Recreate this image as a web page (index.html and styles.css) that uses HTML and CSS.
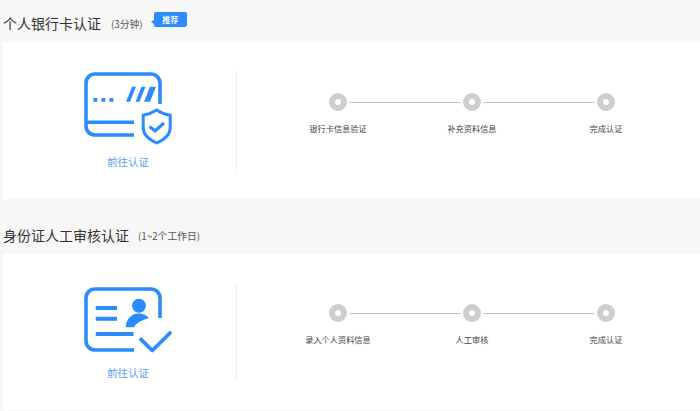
FILE: index.html
```html
<!DOCTYPE html>
<html lang="zh">
<head>
<meta charset="utf-8">
<title>认证</title>
<link rel="stylesheet" href="styles.css">
</head>
<body>
<section class="section first">
  <header class="head">
    <h2 class="title">个人银行卡认证</h2>
    <span class="sub">(3分钟)</span>
    <span class="badge">推荐</span>
  </header>
  <div class="card">
    <div class="entry">
      <svg class="icon" width="90" height="74" viewBox="0 0 90 74" fill="none" stroke="#2d8cfc" stroke-width="3.6">
        <path d="M76 32V11a9 9 0 0 0-9-9H11a9 9 0 0 0-9 9v43a9 9 0 0 0 9 9h39"/>
        <path d="M2 50.300h48"/>
        <g fill="#2d8cfc" stroke="none">
          <rect x="9.500" y="26" width="3.800" height="3.800"/>
          <rect x="17.500" y="26" width="3.800" height="3.800"/>
          <rect x="25.500" y="26" width="3.800" height="3.800"/>
          <path d="M42 29.700 48 14.700h4l-6 15z"/>
          <path d="M51.500 29.700 57.500 14.700h4l-6 15z"/>
          <path d="M60 29.700 66 14.700H72l-6 15z"/>
        </g>
        <path stroke-width="3" d="M72.700 38C68 41 64 42.500 59.200 43.200V56c0 7 6.800 12 13.500 15 6.700-3 13.500-8 13.500-15V43.200C81.500 42.500 77 41 72.700 38Z"/>
        <path stroke-width="3.200" d="M65.500 54.500 71 59l9-8"/>
      </svg>
      <a class="link">前往认证</a>
    </div>
    <ol class="steps">
      <li class="step"><span class="dot"></span><span class="label">银行卡信息验证</span></li>
      <li class="step"><span class="dot"></span><span class="label">补充资料信息</span></li>
      <li class="step"><span class="dot"></span><span class="label">完成认证</span></li>
    </ol>
  </div>
</section>
<section class="section second">
  <header class="head">
    <h2 class="title">身份证人工审核认证</h2>
    <span class="sub">(1~2个工作日)</span>
  </header>
  <div class="card">
    <div class="entry">
      <svg class="icon" width="90" height="74" viewBox="0 0 90 74" fill="none" stroke="#2d8cfc" stroke-width="3.6">
        <path d="M76 31V11a9 9 0 0 0-9-9H11a9 9 0 0 0-9 9v43a9 9 0 0 0 9 9h39"/>
        <path stroke-width="4" d="M11.700 21H33M11.700 31.700H33M11.700 47h37.800"/>
        <circle cx="55" cy="18.700" r="7" fill="#2d8cfc" stroke="none"/>
        <path fill="#2d8cfc" stroke="none" d="M41.700 40.300C42 32 48 26.500 54 26.500c5 0 9 2 11 4.500-7 2-13 5-15 9.300z"/>
        <path stroke-width="3.800" stroke-linecap="round" stroke-linejoin="round" d="M57 52.300 68.300 63.500 86 46"/>
      </svg>
      <a class="link">前往认证</a>
    </div>
    <ol class="steps">
      <li class="step"><span class="dot"></span><span class="label">录入个人资料信息</span></li>
      <li class="step"><span class="dot"></span><span class="label">人工审核</span></li>
      <li class="step"><span class="dot"></span><span class="label">完成认证</span></li>
    </ol>
  </div>
</section>
</body>
</html>
```
FILE: styles.css
```css
* { box-sizing: border-box; }
html, body { margin: 0; padding: 0; }
body {
  width: 700px;
  height: 411px;
  overflow: hidden;
  background: #f7f7f7;
  color: #333;
  font-family: "Noto Sans CJK SC", "Liberation Sans", sans-serif;
}
.section { padding-left: 3px; }
.first .head { height: 42px; padding-top: 3px; }
.second .head { height: 55px; padding-top: 16px; }
.first .card { height: 157px; }
.second .card { height: 156px; }
.head {
  display: flex;
  align-items: center;
}
.title {
  margin: 0;
  font-size: 14px;
  font-weight: 400;
  line-height: 20px;
  color: #333;
}
.sub {
  margin: 2px 0 0 10px;
  font-size: 9.800px;
  color: #555;
}
.second .sub { margin-left: 9px; }
.badge {
  position: relative;
  align-self: flex-start;
  margin: 9px 0 0 11px;
  width: 33px;
  height: 15px;
  border-radius: 2px;
  background: #2d8cfc;
  color: #fff;
  font-size: 8px;
  font-weight: 700;
  line-height: 15px;
  text-align: center;
}
.badge::before {
  content: "";
  position: absolute;
  left: -3px;
  bottom: 3px;
  border-style: solid;
  border-width: 2px 3px 2px 0;
  border-color: transparent #2d8cfc transparent transparent;
}
.card {
  display: flex;
  align-items: flex-start;
  background: #fff;
  padding-top: 29px;
}
.entry {
  display: flex;
  flex-direction: column;
  align-items: flex-start;
  width: 234px;
  height: 99px;
  border-right: 1px solid #ececec;
  padding: 1px 0 0 81px;
}
.second .entry { height: 98px; padding-top: 4px; }
.icon { display: block; flex: none; }
.link {
  margin: 9px 0 0 23px;
  font-size: 10.500px;
  line-height: 14px;
  color: #5a9ff5;
}
.second .link { margin-top: 5px; }
.steps {
  display: grid;
  grid-template-columns: repeat(3, 134px);
  margin: 22px 0 0 34px;
  padding: 0;
  list-style: none;
}
.second .steps { margin-top: 21px; }
.step {
  position: relative;
  display: flex;
  flex-direction: column;
  align-items: center;
}
.step:not(:last-child)::after {
  content: "";
  position: absolute;
  left: 79px;
  top: 9px;
  width: 110px;
  height: 1px;
  background: #bfbfbf;
}
.dot {
  width: 18px;
  height: 18px;
  border-radius: 50%;
  border: 6px solid #cecece;
  background: #fff;
}
.label {
  margin-top: 11px;
  font-size: 8.200px;
  line-height: 12px;
  color: #444;
  white-space: nowrap;
}
```
